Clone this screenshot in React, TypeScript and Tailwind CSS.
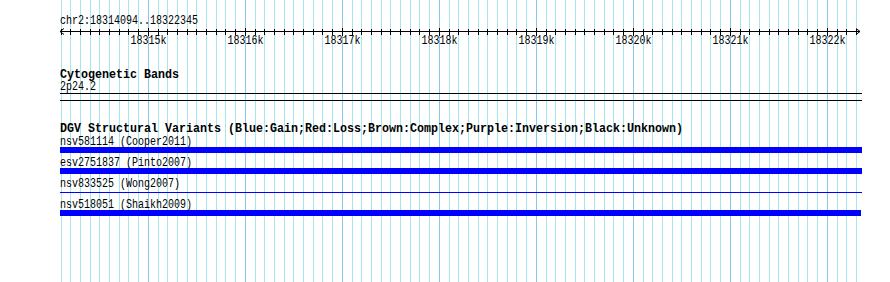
import React from "react"

const START = 18314094
const END = 18322345
const X0 = 60
const PX = 0.097 // px per bp

const xAt = (bp: number) => X0 + (bp - START) * PX
const snap = (x: number) => Math.round(x) + 0.5

const gridBp: number[] = []
for (let bp = 18314100; bp <= 18322300; bp += 100) gridBp.push(bp)

const majors = gridBp.filter((bp) => bp % 1000 === 0)

const variants = [
  { label: "nsv581114 (Cooper2011)", kind: "bar", width: 802 },
  { label: "esv2751837 (Pinto2007)", kind: "bar", width: 802 },
  { label: "nsv833525 (Wong2007)", kind: "line", width: 802 },
  { label: "nsv518051 (Shaikh2009)", kind: "bar", width: 801 },
]

const mono = "font-['Liberation_Mono','DejaVu_Sans_Mono',monospace]"

// gd-like fonts: taller glyphs squeezed to 6px / 7px cells
function Small({ children }: { children: React.ReactNode }) {
  return <span className="inline-block origin-left scale-x-[0.833] whitespace-nowrap">{children}</span>
}
function Bold({ children }: { children: React.ReactNode }) {
  return <span className="inline-block origin-left scale-x-[0.933] whitespace-nowrap">{children}</span>
}

function Grid() {
  return (
    <svg className="absolute inset-0" width={890} height={282}>
      {gridBp.map((bp) => (
        <line
          key={bp}
          x1={snap(xAt(bp))}
          x2={snap(xAt(bp))}
          y1={0}
          y2={282}
          stroke={bp % 1000 === 0 ? "#86c8ee" : "#a6e6ee"}
          strokeWidth={1}
        />
      ))}
    </svg>
  )
}

function Ruler() {
  const end = Math.round(xAt(END))
  return (
    <svg width={890} height={18} className="block">
      {/* axis, local y 0 == page y 28 */}
      <line x1={X0} x2={end} y1={3.5} y2={3.5} stroke="#000" />
      <polyline points={`${X0 + 4},0.5 ${X0},3.5 ${X0 + 4},6.5`} fill="none" stroke="#000" />
      <polyline points={`${end - 4},0.5 ${end},3.5 ${end - 4},6.5`} fill="none" stroke="#000" />
      {gridBp.map((bp) => {
        const major = bp % 1000 === 0
        return (
          <line
            key={bp}
            x1={snap(xAt(bp))}
            x2={snap(xAt(bp))}
            y1={major ? 0 : 1}
            y2={major ? 8 : 7}
            stroke="#000"
          />
        )
      })}
      {majors.map((bp) => (
        <text
          key={bp}
          transform={`translate(${Math.round(xAt(bp)) + 0.5},16) scale(0.833,1)`}
          textAnchor="middle"
          fontFamily="'Liberation Mono', 'DejaVu Sans Mono', monospace"
          fontSize={12}
          fill="#000"
        >
          {bp / 1000}k
        </text>
      ))}
    </svg>
  )
}

export default function App() {
  return (
    <div className="relative w-[890px] h-[282px] overflow-hidden bg-white text-black">
      <Grid />
      <div className={`relative flex flex-col ${mono}`}>
        <div className="pl-[60px] pt-[15px] text-[12px] leading-[13px]">
          <Small>chr2:18314094..18322345</Small>
        </div>
        <Ruler />

        {/* Cytogenetic bands */}
        <div className="pl-[60px] mt-[22px] text-[12.5px] leading-[14px] font-bold">
          <Bold>Cytogenetic Bands</Bold>
        </div>
        <div className="pl-[60px] text-[12px] leading-[11px]">
          <Small>2p24.2</Small>
        </div>
        <div className="ml-[60px] w-[802px] h-px bg-black" />
        <div className="ml-[60px] w-[802px] h-px bg-black mt-[6px]" />

        {/* DGV */}
        <div className="pl-[60px] mt-[21px] text-[12.5px] leading-[15px] font-bold">
          <Bold>DGV Structural Variants (Blue:Gain;Red:Loss;Brown:Complex;Purple:Inversion;Black:Unknown)</Bold>
        </div>
        <div className="flex flex-col gap-[5px]">
          {variants.map((v) => (
            <div key={v.label} className="flex flex-col">
              <div className="pl-[60px] text-[12px] leading-[10px]">
                <Small>{v.label}</Small>
              </div>
              <div className="h-[6px] pl-[60px]">
                {v.kind === "bar" ? (
                  <div className="h-[6px] bg-[#0000ff]" style={{ width: v.width }} />
                ) : (
                  <div className="pt-[3px]">
                    <div className="h-px bg-[#0000ff]" style={{ width: v.width }} />
                  </div>
                )}
              </div>
            </div>
          ))}
        </div>
      </div>
    </div>
  )
}
